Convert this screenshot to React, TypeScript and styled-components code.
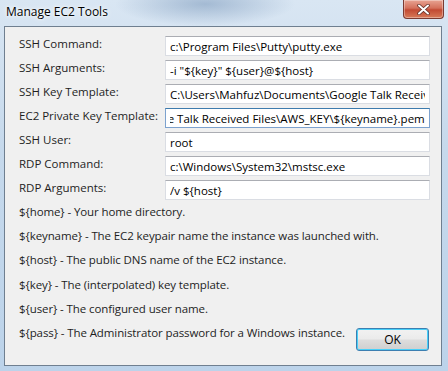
import React, { useEffect, useRef } from 'react';
import styled, { createGlobalStyle } from 'styled-components';

const GlobalStyle = createGlobalStyle`
  html, body {
    margin: 0;
    padding: 0;
    background: #c9dcee;
  }
`;

const Window = styled.div`
  width: 448px;
  height: 371px;
  display: flex;
  flex-direction: column;
  box-sizing: border-box;
  font-family: 'Open Sans', 'Noto Sans', sans-serif;
  font-size: 11.5px;
  color: #1e1e1e;
  background:
    radial-gradient(ellipse 90px 22px at 205px 4px, rgba(120, 150, 185, 0.55), rgba(120, 150, 185, 0) 100%),
    linear-gradient(180deg, #d9e6f3 0%, #c6d9ec 40%, #bcd3ea 100%);
`;

const TitleBar = styled.div`
  height: 26px;
  display: flex;
  align-items: flex-start;
  justify-content: space-between;
  padding: 0 4px 0 6px;
  box-sizing: border-box;
`;

const Title = styled.span`
  margin-top: 4px;
  font-size: 12px;
  line-height: 16px;
  color: #000;
  text-shadow: 0 0 6px #fff, 0 0 3px #fff;
`;

const CloseButton = styled.div`
  width: 41px;
  height: 19px;
  display: flex;
  align-items: center;
  justify-content: center;
  box-sizing: border-box;
  border: 1px solid #7a3a31;
  border-top: 0;
  border-radius: 0 0 4px 4px;
  background: linear-gradient(180deg, #e8a493 0%, #d4705b 45%, #c24a33 55%, #d77a58 100%);
  box-shadow: inset 0 0 0 1px rgba(255, 255, 255, 0.35);
`;

const Client = styled.div`
  flex: 1;
  min-height: 0;
  margin: 0 6px 5px 4px;
  display: flex;
  flex-direction: column;
  padding: 9px 11px 14px 14px;
  box-sizing: border-box;
  background: #f0f0f0;
  border: 1px solid #6f7f90;
`;

const Form = styled.div`
  display: grid;
  grid-template-columns: 146px 1fr;
  row-gap: 4px;
  align-items: start;
`;

const Label = styled.label`
  line-height: 16px;
  white-space: nowrap;
`;

const Field = styled.input<{ $focused?: boolean }>`
  height: 20px;
  width: 100%;
  box-sizing: border-box;
  margin: 0;
  padding: 0 4px;
  font: inherit;
  color: #000;
  background: #fff;
  outline: none;
  border: 1px solid ${p => (p.$focused ? '#7da2ce' : '#dadde3')};
  border-top-color: ${p => (p.$focused ? '#3d7bad' : '#abadb3')};
`;

const Footer = styled.div`
  flex: 1;
  min-height: 0;
  display: flex;
  align-items: flex-start;
  gap: 8px;
`;

const Help = styled.div`
  flex: 1;
  min-width: 0;
  display: flex;
  flex-direction: column;
  letter-spacing: -0.1px;
`;

const HelpLine = styled.div`
  line-height: 24.2px;
  white-space: nowrap;
`;

const OkButton = styled.button`
  flex-shrink: 0;
  align-self: flex-end;
  width: 73px;
  height: 23px;
  margin: 0 1px 0 0;
  padding: 0;
  font: inherit;
  font-size: 12px;
  color: #000;
  border: 1px solid #3c7fb1;
  border-radius: 3px;
  background: linear-gradient(180deg, #f2f2f2 0%, #ebebeb 48%, #dddddd 52%, #cfcfcf 100%);
  box-shadow: inset 0 0 0 1px #48d0f9;
`;

const fields: ReadonlyArray<{ label: string; value: string; focused?: boolean }> = [
  { label: 'SSH Command:', value: 'c:\\Program Files\\Putty\\putty.exe' },
  { label: 'SSH Arguments:', value: '-i "${key}" ${user}@${host}' },
  {
    label: 'SSH Key Template:',
    value: 'C:\\Users\\Mahfuz\\Documents\\Google Talk Received Files\\AWS_KEY\\${keyname}.pem',
  },
  {
    label: 'EC2 Private Key Template:',
    value: 'C:\\Users\\Mahfuz\\Documents\\Google Talk Received Files\\AWS_KEY\\${keyname}.pem',
    focused: true,
  },
  { label: 'SSH User:', value: 'root' },
  { label: 'RDP Command:', value: 'c:\\Windows\\System32\\mstsc.exe' },
  { label: 'RDP Arguments:', value: '/v ${host}' },
];

const help = [
  '${home} - Your home directory.',
  '${keyname} - The EC2 keypair name the instance was launched with.',
  '${host} - The public DNS name of the EC2 instance.',
  '${key} - The (interpolated) key template.',
  '${user} - The configured user name.',
  '${pass} - The Administrator password for a Windows instance.',
];

const TextField = ({ value, focused }: { value: string; focused?: boolean }) => {
  const ref = useRef<HTMLInputElement>(null);
  useEffect(() => {
    if (focused && ref.current) {
      ref.current.scrollLeft = ref.current.scrollWidth;
    }
  }, [focused]);
  return <Field ref={ref} defaultValue={value} $focused={focused} readOnly />;
};

const App = () => (
  <Window>
    <GlobalStyle />
    <TitleBar>
      <Title>Manage EC2 Tools</Title>
      <CloseButton>
        <svg width="13" height="11" viewBox="0 0 13 11">
          <path
            d="M2 1.5 L11 9.5 M11 1.5 L2 9.5"
            stroke="#5a2a22"
            strokeWidth="3.4"
            strokeLinecap="round"
          />
          <path
            d="M2 1.5 L11 9.5 M11 1.5 L2 9.5"
            stroke="#fff"
            strokeWidth="2"
            strokeLinecap="round"
          />
        </svg>
      </CloseButton>
    </TitleBar>
    <Client>
      <Form>
        {fields.map(f => (
          <React.Fragment key={f.label}>
            <Label>{f.label}</Label>
            <TextField value={f.value} focused={f.focused} />
          </React.Fragment>
        ))}
      </Form>
      <Footer>
        <Help>
          {help.map(h => (
            <HelpLine key={h}>{h}</HelpLine>
          ))}
        </Help>
        <OkButton>OK</OkButton>
      </Footer>
    </Client>
  </Window>
);

export default App;
